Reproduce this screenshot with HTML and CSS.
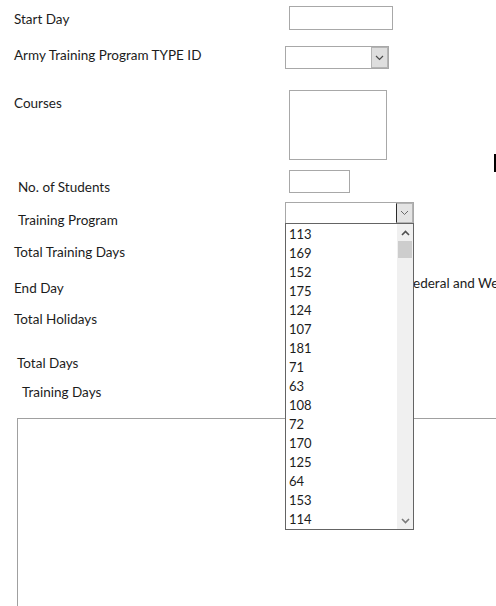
FILE: index.html
```html
<!DOCTYPE html>
<html>
<head>
<meta charset="utf-8">
<link rel="stylesheet" href="styles.css">
</head>
<body>
<div class="page">
  <div class="row r1">
    <span class="label">Start Day</span>
    <div class="box in-start"></div>
  </div>
  <div class="row r2">
    <span class="label">Army Training Program TYPE ID</span>
    <div class="select sel-type">
      <div class="select-btn">
        <svg width="9" height="6" viewBox="0 0 9 6"><polyline points="1,1 4.5,4.5 8,1" fill="none" stroke="#4a4a4a" stroke-width="1.2"/></svg>
      </div>
    </div>
  </div>
  <div class="row r3">
    <span class="label">Courses</span>
    <div class="box in-courses"></div>
  </div>
  <div class="row r4">
    <span class="label">No. of Students</span>
    <div class="box in-students"></div>
  </div>
  <div class="row r5">
    <span class="label">Training Program</span>
    <div class="select sel-program">
      <div class="select-btn open">
        <svg width="9" height="6" viewBox="0 0 9 6"><polyline points="1,1 4.5,4.5 8,1" fill="none" stroke="#6a6a6a" stroke-width="1"/></svg>
      </div>
      <div class="dropdown">
        <ul class="options">
          <li>113</li><li>169</li><li>152</li><li>175</li><li>124</li><li>107</li><li>181</li><li>71</li>
          <li>63</li><li>108</li><li>72</li><li>170</li><li>125</li><li>64</li><li>153</li><li>114</li>
        </ul>
        <div class="scrollbar">
          <div class="sb-arrow up">
            <svg width="9" height="6" viewBox="0 0 9 6"><polyline points="1,5 4.5,1.5 8,5" fill="none" stroke="#505050" stroke-width="1.6"/></svg>
          </div>
          <div class="sb-thumb"></div>
          <div class="sb-track"></div>
          <div class="sb-arrow down">
            <svg width="9" height="6" viewBox="0 0 9 6"><polyline points="1,1 4.5,4.5 8,1" fill="none" stroke="#7a7a7a" stroke-width="1.6"/></svg>
          </div>
        </div>
      </div>
    </div>
  </div>
  <div class="row r6">
    <span class="label">Total Training Days</span>
  </div>
  <div class="row r7">
    <span class="label">End Day</span>
    <span class="note">Federal and Weekend Holidays</span>
  </div>
  <div class="row r8">
    <span class="label">Total Holidays</span>
  </div>
  <div class="row r9">
    <span class="label">Total Days</span>
  </div>
  <div class="row r10">
    <span class="label">Training Days</span>
  </div>
  <div class="panel"></div>
  <div class="caret"></div>
</div>
</body>
</html>
```

FILE: styles.css
```css
html, body {
  margin: 0;
  padding: 0;
  overflow: hidden;
  background: #ffffff;
}

body {
  font-family: Lato, "Open Sans", sans-serif;
  font-size: 13px;
  color: #1c1c1c;
}

.page {
  position: relative;
  width: 496px;
  height: 606px;
}

.row {
  display: flex;
  align-items: flex-start;
  box-sizing: border-box;
}

.label {
  width: 285px;
  flex: none;
  box-sizing: border-box;
  font-size: 13.5px;
  line-height: 18px;
  white-space: nowrap;
  padding-left: 14px;
}

.box {
  box-sizing: border-box;
  border: 1px solid #a8a8a8;
  background: #fff;
  margin-left: 4px;
}

.select {
  position: relative;
  box-sizing: border-box;
  border: 1px solid #a8a8a8;
  background: #fff;
  display: flex;
  justify-content: flex-end;
}

.select-btn {
  width: 17px;
  height: 100%;
  box-sizing: border-box;
  background: #dedede;
  border: 1px solid #b4b4b4;
  display: flex;
  align-items: center;
  justify-content: center;
}

.select-btn.open {
  border-left: 1px solid #2a2a2a;
  background: #e4e4e4;
}

/* rows */
.r1 { height: 37px; }
.r1 .label { margin-top: 10px; }
.in-start { margin-top: 6px; width: 104px; height: 24px; }

.r2 { height: 48px; }
.r2 .label { margin-top: 9px; }
.sel-type { margin-top: 9px; width: 104px; height: 23px; }

.r3 { height: 80px; }
.r3 .label { margin-top: 9px; }
.in-courses { margin-top: 5px; width: 98px; height: 70px; }

.r4 { height: 33px; }
.r4 .label { margin-top: 13px; padding-left: 18px; }
.in-students { margin-top: 5px; width: 61px; height: 23px; }

.r5 { height: 36px; }
.r5 .label { margin-top: 13px; padding-left: 18px; }
.sel-program { margin-top: 4px; width: 129px; height: 22px; z-index: 5; }

.r6 { height: 32px; }
.r6 .label { margin-top: 9px; }

.r7 { height: 40px; }
.r7 .label { margin-top: 13px; }
.note {
  margin-top: 8px;
  margin-left: 121px;
  font-size: 13.5px;
  line-height: 18px;
  white-space: nowrap;
}

.r8 { height: 40px; }
.r8 .label { margin-top: 4px; }

.r9 { height: 36px; }
.r9 .label { margin-top: 8px; padding-left: 17px; }

.r10 { height: 36px; }
.r10 .label { margin-top: 1px; padding-left: 22px; }

/* dropdown list overlay */
.dropdown {
  position: absolute;
  left: -1px;
  top: 20px;
  width: 129px;
  height: 307px;
  box-sizing: border-box;
  border: 1px solid #646464;
  background: #fff;
  display: flex;
}

.options {
  list-style: none;
  margin: 0;
  padding: 1px 0 0 0;
  flex: 1;
}

.options li {
  height: 19px;
  line-height: 19px;
  padding-left: 3px;
}

.scrollbar {
  width: 16px;
  background: #f0f0f0;
  display: flex;
  flex-direction: column;
}

.sb-arrow {
  height: 17px;
  display: flex;
  align-items: center;
  justify-content: center;
}

.sb-thumb {
  height: 17px;
  background: #cdcdcd;
  margin: 0 1px;
}

.sb-track {
  flex: 1;
}

/* big panel at bottom */
.panel {
  margin-left: 17px;
  width: 500px;
  height: 200px;
  box-sizing: border-box;
  border-top: 1px solid #a0a0a0;
  border-left: 1px solid #a0a0a0;
}

.caret {
  position: absolute;
  left: 494px;
  top: 154px;
  width: 2px;
  height: 18px;
  background: #000;
}
```
